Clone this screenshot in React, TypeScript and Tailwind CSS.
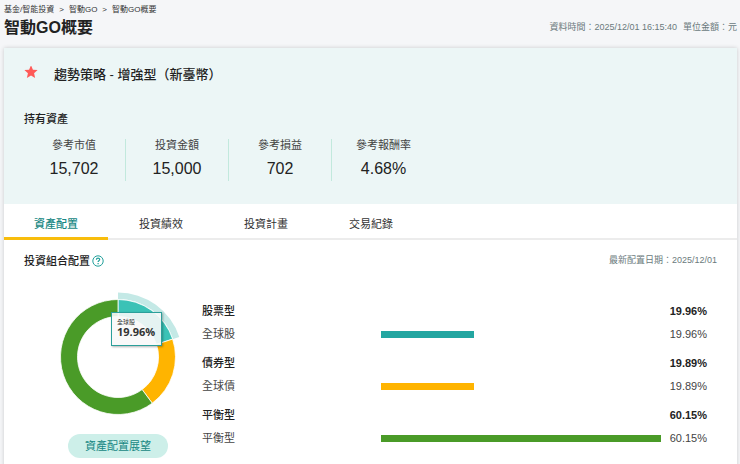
import { useState } from "react";
import { clsx } from "clsx";

interface Metric {
  label: string;
  value: string;
}

interface Allocation {
  group: string;
  name: string;
  pct: number;
  bar: string;
  fill: string;
}

const METRICS: Metric[] = [
  { label: "參考市值", value: "15,702" },
  { label: "投資金額", value: "15,000" },
  { label: "參考損益", value: "702" },
  { label: "參考報酬率", value: "4.68%" },
];

const TABS = ["資產配置", "投資績效", "投資計畫", "交易紀錄"];

const ALLOCATIONS: Allocation[] = [
  { group: "股票型", name: "全球股", pct: 19.96, bar: "bg-[#23a6a1]", fill: "#3bc2b6" },
  { group: "債券型", name: "全球債", pct: 19.89, bar: "bg-[#ffb400]", fill: "#ffb400" },
  { group: "平衡型", name: "平衡型", pct: 60.15, bar: "bg-[#4a9b28]", fill: "#4a9b28" },
];

const MAX_PCT = Math.max(...ALLOCATIONS.map((a) => a.pct));

// Ring segment between two fractions of the full circle, clockwise from 12 o'clock
function arcPath(from: number, to: number, inner: number, outer: number) {
  const point = (f: number, r: number) => {
    const a = f * Math.PI * 2;
    return `${(Math.sin(a) * r).toFixed(2)} ${(-Math.cos(a) * r).toFixed(2)}`;
  };
  const large = to - from > 0.5 ? 1 : 0;
  return [
    `M${point(from, outer)}`,
    `A${outer} ${outer} 0 ${large} 1 ${point(to, outer)}`,
    `L${point(to, inner)}`,
    `A${inner} ${inner} 0 ${large} 0 ${point(from, inner)}`,
    "Z",
  ].join(" ");
}

function Donut() {
  let start = 0;
  const slices = ALLOCATIONS.map((a) => {
    const from = start;
    start += a.pct / 100;
    return { ...a, from, to: start };
  });
  const active = slices[0];

  return (
    <div className="relative">
      <svg width="130" height="130" viewBox="-65 -65 130 130" role="img" aria-label="投資組合配置">
        <path d={arcPath(active.from, active.to, 58, 64.5)} fill="#c4e9e6" />
        {slices.map((s) => (
          <path
            key={s.group}
            d={arcPath(s.from, s.to, 40.5, 57.5)}
            fill={s.fill}
            stroke="#fff"
            strokeWidth="0.8"
          />
        ))}
      </svg>
      <div className="absolute left-[58px] top-5 h-[34px] w-[51px] border border-[#2b9f9a] bg-[#f8f8f8]/90 px-[5px] pt-1 shadow-[1px_1px_2px_rgba(0,0,0,0.3)]">
        <div className="text-[6px] leading-[10px]">{active.name}</div>
        <div className="font-['Open_Sans',sans-serif] text-[11px] font-bold leading-[10px]">
          {active.pct}%
        </div>
      </div>
    </div>
  );
}

function AllocationTable() {
  return (
    <table className="w-full table-fixed text-[11px]">
      <colgroup>
        <col className="w-[179px]" />
        <col />
        <col className="w-[46px]" />
      </colgroup>
      {ALLOCATIONS.map((a) => (
        <tbody key={a.group} className="group">
          <tr className="h-[29px] group-first-of-type:h-[23px]">
            <th scope="rowgroup" colSpan={2} className="p-0 pt-1.5 text-left font-medium text-[#222] group-first-of-type:pt-0">
              {a.group}
            </th>
            <td className="p-0 pt-1.5 text-right font-bold text-[#222] group-first-of-type:pt-0">
              {a.pct}%
            </td>
          </tr>
          <tr className="h-[23px] text-[#444]">
            <th scope="row" className="p-0 text-left font-normal">
              {a.name}
            </th>
            <td className="p-0">
              <div className={clsx("h-[7px]", a.bar)} style={{ width: `${(a.pct / MAX_PCT) * 100}%` }} />
            </td>
            <td className="p-0 text-right">{a.pct}%</td>
          </tr>
        </tbody>
      ))}
    </table>
  );
}

export default function App() {
  const [tab, setTab] = useState(TABS[0]);

  return (
    <div
      lang="zh-Hant"
      className="min-h-screen bg-[#f5f6f8] pl-1 pr-[3px] pt-1 font-['Liberation_Sans','Noto_Sans_CJK_TC',sans-serif] text-[#333]"
    >
      <nav aria-label="路徑" className="flex gap-[5px] text-[8px] leading-3">
        <a href="#fund">基金/智能投資</a>
        <span>&gt;</span>
        <a href="#go">智動GO</a>
        <span>&gt;</span>
        <span>智動GO概要</span>
      </nav>
      <div className="flex h-6 items-center justify-between">
        <h1 className="text-base font-bold leading-6 text-[#222]">智動GO概要</h1>
        <p className="flex gap-1.5 text-[9px] text-[#6b7a7d]">
          <span>資料時間：2025/12/01 16:15:40</span>
          <span>單位金額：元</span>
        </p>
      </div>

      <main className="mt-2 bg-white shadow-[0_0_4px_rgba(0,0,0,0.18)]">
        <section className="bg-[#ecf6f6] pb-[23px] pt-4">
          <div className="flex h-[21px] items-center gap-4 px-5">
            <svg width="14" height="18" viewBox="0 2 24 31" fill="#ff5a58" aria-hidden="true">
              <path d="M12 .8l3.3 7.5 8.1.8-6.1 5.4 1.8 8-7.1-4.2-7.1 4.2 1.8-8L.6 9.1l8.1-.8z" />
            </svg>
            <h2 className="text-[13px] font-medium text-[#222]">趨勢策略 - 增強型（新臺幣）</h2>
          </div>
          <h3 className="mt-[26px] px-5 text-[11px] font-medium leading-4 text-[#222]">持有資產</h3>
          <dl className="mt-3 flex px-[19px] text-center">
            {METRICS.map((m) => (
              <div key={m.label} className="w-[103px] border-r border-[#c2e9dd] last:border-r-0">
                <dt className="text-[11px] leading-3 text-[#444]">{m.label}</dt>
                <dd className="mt-1.5 text-base leading-6 text-[#222]">{m.value}</dd>
              </div>
            ))}
          </dl>
        </section>

        <div role="tablist" className="flex h-9 gap-px shadow-[inset_0_-2px_0_#ececec]">
          {TABS.map((t) => (
            <button
              key={t}
              type="button"
              role="tab"
              aria-selected={t === tab}
              onClick={() => setTab(t)}
              className={clsx(
                "w-[104px] border-b-3 pt-2 text-[11px]",
                t === tab ? "border-[#f8bd0c] font-medium text-[#178783]" : "border-transparent"
              )}
            >
              {t}
            </button>
          ))}
        </div>

        <section className="px-5 pb-6 pt-3">
          <div className="flex h-[18px] items-center justify-between">
            <div className="flex items-center gap-0.5">
              <h3 className="text-[11px] font-medium text-[#222]">投資組合配置</h3>
              <button type="button" aria-label="說明">
                <svg width="12" height="12" viewBox="0 0 12 12" fill="none" stroke="#23a09b">
                  <circle cx="6" cy="6" r="5.2" strokeWidth="1" />
                  <path d="M4.4 4.8c0-2.3 3.3-2.1 3.3-.2 0 1.2-1.6 1.2-1.6 2.4" strokeWidth="1.2" />
                  <path d="M6.1 8v1.2" strokeWidth="1.2" />
                </svg>
              </button>
            </div>
            <p className="text-[9px] text-[#6b7a7d]">最新配置日期：2025/12/01</p>
          </div>
          <div className="mt-[22px] flex">
            <div className="flex w-[178px] flex-col items-center pl-3.5 pr-1">
              <Donut />
              <button
                type="button"
                className="mt-3 h-6 w-[100px] rounded-full bg-[#cdefe9] text-[11px] text-[#178783]"
              >
                資產配置展望
              </button>
            </div>
            <div className="flex-1 pr-2.5 pt-2">
              <AllocationTable />
            </div>
          </div>
        </section>
      </main>
    </div>
  );
}
